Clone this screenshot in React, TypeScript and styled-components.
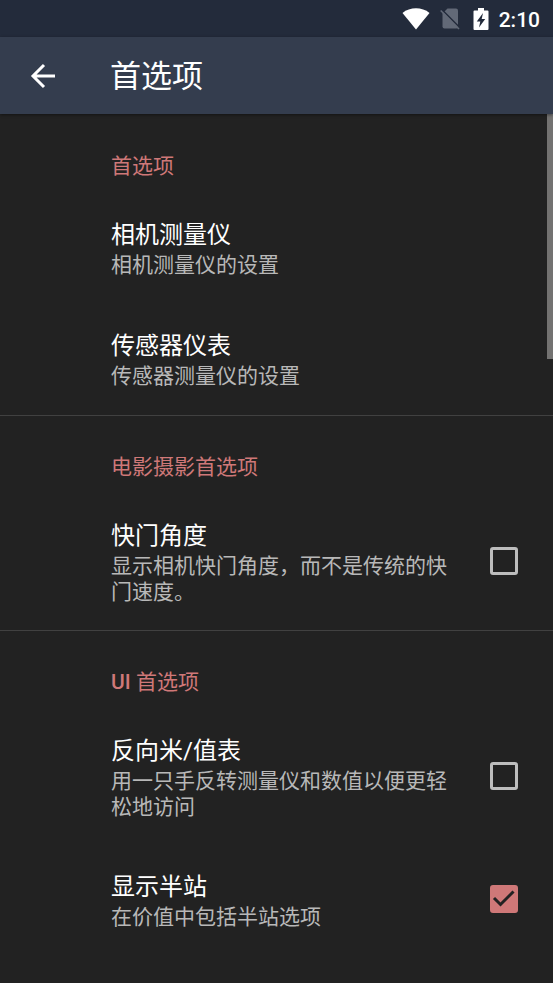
import React, { useState } from "react";
import styled, { createGlobalStyle } from "styled-components";

const colors = {
  status: "#232b3b",
  statusDim: "#626977",
  bar: "#343d4e",
  page: "#222222",
  accent: "#cf7878",
  title: "#ffffff",
  summary: "#b8b8b8",
  divider: "#414141",
  box: "#bdbdbd",
  thumb: "#737271",
};

const GlobalStyle = createGlobalStyle`
  * { box-sizing: border-box; }
  body {
    margin: 0;
    background: ${colors.page};
    font-family: Roboto, "Noto Sans CJK SC", sans-serif;
  }
`;

const Screen = styled.div`
  display: flex;
  flex-direction: column;
  min-height: 100vh;
  background: ${colors.page};
`;

const StatusBar = styled.div`
  display: flex;
  align-items: center;
  justify-content: flex-end;
  height: 37px;
  padding-right: 13px;
  background: ${colors.status};
  color: #ffffff;
`;

const StatusIcon = styled.svg<{ $gap: number }>`
  display: block;
  flex: none;
  margin-right: ${(p) => p.$gap}px;
`;

const Clock = styled.time`
  font-size: 21px;
  line-height: 26px;
  font-weight: 500;
  padding-top: 2px;
`;

const AppBar = styled.header`
  position: relative;
  z-index: 1;
  display: flex;
  align-items: center;
  height: 77px;
  padding-left: 25px;
  background: ${colors.bar};
  box-shadow: 0 1px 3px rgba(0, 0, 0, 0.45);
`;

const BackButton = styled.button`
  display: flex;
  width: 85px;
  padding: 0;
  border: 0;
  background: none;
  color: #ffffff;
  cursor: pointer;
`;

const AppTitle = styled.h1`
  margin: 0;
  padding-top: 3px;
  color: ${colors.title};
  font-size: 31px;
  line-height: 40px;
  font-weight: 400;
`;

const Content = styled.main`
  position: relative;
  flex: 1;
`;

const ScrollThumb = styled.div`
  position: absolute;
  top: 0;
  right: 0;
  width: 6px;
  height: 245px;
  background: ${colors.thumb};
`;

const Group = styled.section`
  & + & {
    border-top: 1px solid ${colors.divider};
  }
  & + & > h2 {
    padding-top: 38px;
  }
`;

const GroupTitle = styled.h2`
  margin: 0;
  padding: 39px 32px 14px 111px;
  color: ${colors.accent};
  font-size: 21px;
  line-height: 26px;
  font-weight: 400;
`;

const Latin = styled.span`
  font-weight: 500;
`;

const rowStyle = `
  display: flex;
  align-items: center;
  width: 100%;
  border: 0;
  background: none;
  font-family: inherit;
  text-align: left;
  cursor: pointer;
`;

const LinkRow = styled.button`
  ${rowStyle}
  padding: 27px 35px 26px 111px;
`;

const CheckRow = styled.label`
  ${rowStyle}
  padding: 27px 35px 25px 111px;
`;

const RowText = styled.span`
  display: flex;
  flex: 1;
  flex-direction: column;
  gap: 2px;
  min-width: 0;
`;

const RowTitle = styled.span`
  color: ${colors.title};
  font-size: 24px;
  line-height: 30px;
`;

const RowSummary = styled.span`
  color: ${colors.summary};
  font-size: 21px;
  line-height: 26px;
`;

const CheckCell = styled.span`
  display: grid;
  flex: none;
  margin-left: 24px;
  padding-bottom: 4px;
  & > * {
    grid-area: 1 / 1;
  }
`;

const CheckInput = styled.input`
  appearance: none;
  width: 28px;
  height: 28px;
  margin: 0;
  border: 3px solid ${colors.box};
  border-radius: 3px;
  cursor: pointer;
  &:checked {
    border-color: ${colors.accent};
    background: ${colors.accent};
  }
`;

const CheckMark = styled.svg`
  pointer-events: none;
`;

function CheckItem(props: { title: string; summary: string; initial?: boolean }) {
  const [on, setOn] = useState(Boolean(props.initial));
  return (
    <CheckRow>
      <RowText>
        <RowTitle>{props.title}</RowTitle>
        <RowSummary>{props.summary}</RowSummary>
      </RowText>
      <CheckCell>
        <CheckInput type="checkbox" checked={on} onChange={(e) => setOn(e.target.checked)} />
        {on && (
          <CheckMark width="28" height="28" viewBox="0 0 28 28" fill="none" aria-hidden="true">
            <path d="M4 13L10.500 19.500L23.500 6.500" stroke={colors.page} strokeWidth="3" />
          </CheckMark>
        )}
      </CheckCell>
    </CheckRow>
  );
}

function LinkItem(props: { title: string; summary: string }) {
  return (
    <LinkRow type="button">
      <RowText>
        <RowTitle>{props.title}</RowTitle>
        <RowSummary>{props.summary}</RowSummary>
      </RowText>
    </LinkRow>
  );
}

export default function App() {
  return (
    <Screen>
      <GlobalStyle />
      <StatusBar>
        <StatusIcon $gap={10} width="28" height="22" viewBox="0 0 28 22" aria-hidden="true">
          <path d="M0.5 5C8 -1.2 20 -1.2 27.500 5L14 21.500Z" fill="#ffffff" />
        </StatusIcon>
        <StatusIcon $gap={13} width="20" height="22" viewBox="0 0 20 22" aria-hidden="true">
          <path d="M7.500 0.500H16Q18 0.500 18 2.500V19Q18 20.500 16 20.500H4.500Q2.500 20.500 2.500 18.500V5.500Z" fill={colors.statusDim} />
          <path d="M2 1.800L20 20" stroke={colors.status} strokeWidth="1.600" />
          <path d="M0.700 2.500L19 21" stroke={colors.statusDim} strokeWidth="1.600" />
        </StatusIcon>
        <StatusIcon $gap={10} width="16" height="22" viewBox="0 0 16 22" aria-hidden="true">
          <path d="M5 0H11V2.500H14.500Q15.500 2.500 15.500 3.500V21Q15.500 22 14.500 22H1.500Q0.500 22 0.500 21V3.500Q0.500 2.500 1.500 2.500H5Z" fill="#ffffff" />
          <path d="M10 5L3.800 13.500H7.300L6 19.500L12.200 11H8.700Z" fill={colors.status} />
        </StatusIcon>
        <Clock>2:10</Clock>
      </StatusBar>
      <AppBar>
        <BackButton type="button" aria-label="返回">
          <svg width="36" height="26" viewBox="0 0 36 26" fill="none" aria-hidden="true">
            <path d="M30 13H8M19 2L8 13L19 24" stroke="currentColor" strokeWidth="3" />
          </svg>
        </BackButton>
        <AppTitle>首选项</AppTitle>
      </AppBar>
      <Content>
        <Group>
          <GroupTitle>首选项</GroupTitle>
          <LinkItem title="相机测量仪" summary="相机测量仪的设置" />
          <LinkItem title="传感器仪表" summary="传感器测量仪的设置" />
        </Group>
        <Group>
          <GroupTitle>电影摄影首选项</GroupTitle>
          <CheckItem title="快门角度" summary="显示相机快门角度，而不是传统的快门速度。" />
        </Group>
        <Group>
          <GroupTitle>
            <Latin>UI</Latin> 首选项
          </GroupTitle>
          <CheckItem title="反向米/值表" summary="用一只手反转测量仪和数值以便更轻松地访问" />
          <CheckItem title="显示半站" summary="在价值中包括半站选项" initial />
        </Group>
        <ScrollThumb />
      </Content>
    </Screen>
  );
}
